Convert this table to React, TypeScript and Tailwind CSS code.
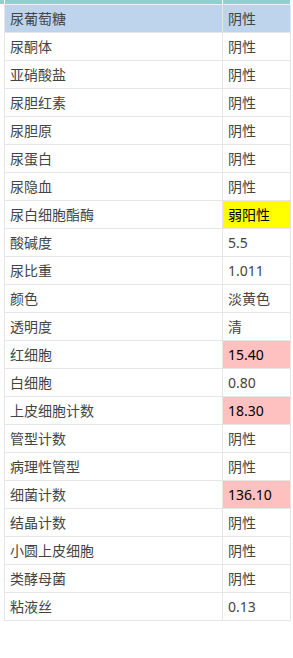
const rows: { name: string; value: string; tone?: 'head' | 'warn' | 'high' }[] = [
  { name: '尿葡萄糖', value: '阴性', tone: 'head' },
  { name: '尿酮体', value: '阴性' },
  { name: '亚硝酸盐', value: '阴性' },
  { name: '尿胆红素', value: '阴性' },
  { name: '尿胆原', value: '阴性' },
  { name: '尿蛋白', value: '阴性' },
  { name: '尿隐血', value: '阴性' },
  { name: '尿白细胞酯酶', value: '弱阳性', tone: 'warn' },
  { name: '酸碱度', value: '5.5' },
  { name: '尿比重', value: '1.011' },
  { name: '颜色', value: '淡黄色' },
  { name: '透明度', value: '清' },
  { name: '红细胞', value: '15.40', tone: 'high' },
  { name: '白细胞', value: '0.80' },
  { name: '上皮细胞计数', value: '18.30', tone: 'high' },
  { name: '管型计数', value: '阴性' },
  { name: '病理性管型', value: '阴性' },
  { name: '细菌计数', value: '136.10', tone: 'high' },
  { name: '结晶计数', value: '阴性' },
  { name: '小圆上皮细胞', value: '阴性' },
  { name: '类酵母菌', value: '阴性' },
  { name: '粘液丝', value: '0.13' },
]

export default function App() {
  return (
    <div className="h-[658px] w-[293px] bg-white text-[14px] text-[#444] font-['Noto_Sans','Noto_Sans_CJK_SC',sans-serif]">
      {/* 上方被截掉的表头 */}
      <div className="flex h-[4px] w-[290px] bg-[#8fd0d0]">
        <div className="w-[4px]" />
        <div className="w-[218px] border-l border-white" />
        <div className="flex-1 border-l border-white" />
      </div>
      <div className="ml-[4px] w-[287px] border-x border-b border-[#e6e6e6]">
        {rows.map(r => (
          <div
            key={r.name}
            className={`flex h-[28px] border-t ${r.tone === 'head' ? 'border-[#f0f0f0] bg-[#bdd4ec]' : 'border-[#e6e6e6]'}`}
          >
            <div className="flex w-[218px] items-center border-r border-[#e6e6e6] pl-[5px]">{r.name}</div>
            <div
              className={`flex flex-1 items-center pl-[5px] ${
                r.tone === 'warn' ? 'bg-[#ffff00] text-black' : r.tone === 'high' ? 'bg-[#ffc0c0] text-black' : ''
              }`}
            >
              {r.value}
            </div>
          </div>
        ))}
      </div>
    </div>
  )
}
